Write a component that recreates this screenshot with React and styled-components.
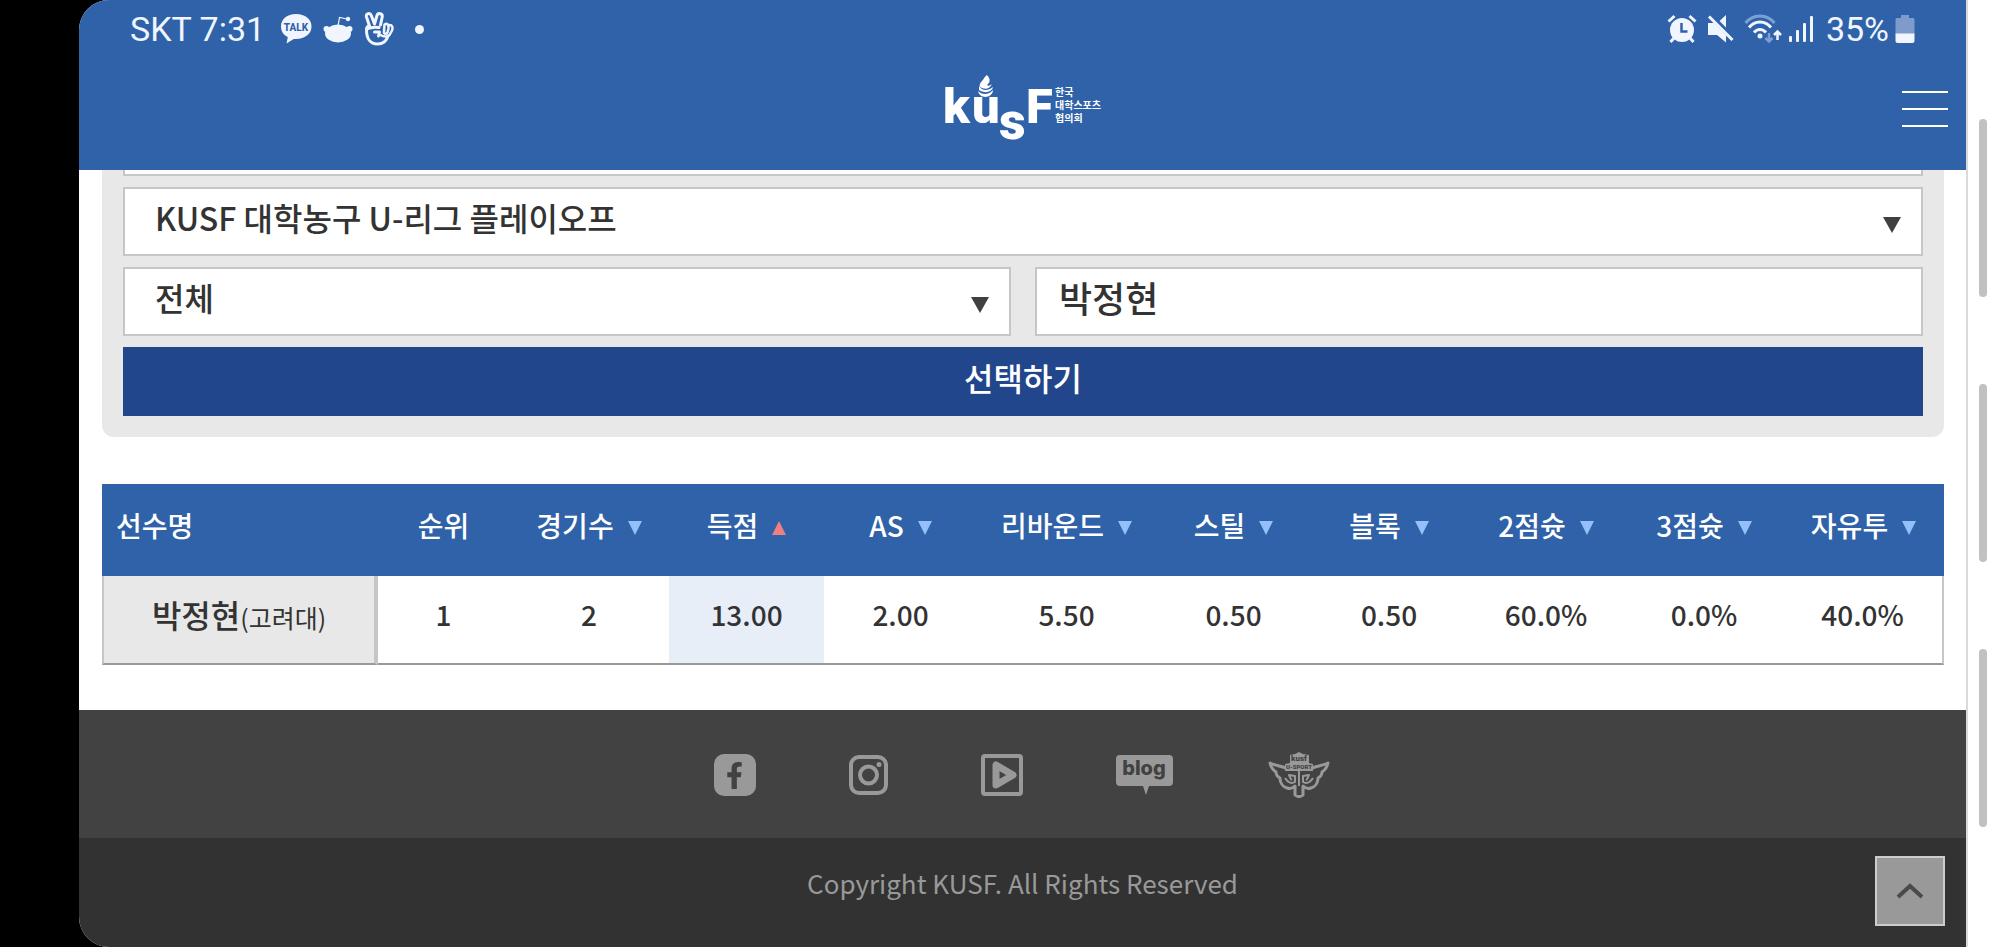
import React, { useState } from 'react';
import styled, { createGlobalStyle } from 'styled-components';
import { FaFacebookF } from 'react-icons/fa';

const GlobalStyle = createGlobalStyle`
  * {
    box-sizing: border-box;
  }

  body {
    margin: 0;
    background: #000000;
    color: #333333;
    font-family: "Noto Sans CJK KR", sans-serif;
    font-weight: 500;
  }

  button, input, select {
    margin: 0;
    font-family: inherit;
    font-weight: inherit;
    color: inherit;
  }
`;

const Device = styled.div`
  display: flex;
  min-height: 100vh;
  padding-left: 79px;
`;

const Screen = styled.div`
  flex: 1;
  min-width: 0;
  display: flex;
  flex-direction: column;
  background: #ffffff;
  border-radius: 30px 0 0 30px;
  overflow: hidden;
`;

const EdgePanel = styled.div`
  width: 34px;
  display: flex;
  flex-direction: column;
  align-items: center;
  gap: 87px;
  padding: 119px 2px 0 0;
  background: #ffffff;
  border-left: 2px solid #dadada;
`;

const EdgeHandle = styled.div`
  width: 8px;
  height: 178px;
  border-radius: 4px;
  background: #c1c1c1;
`;

const Header = styled.header`
  position: relative;
  z-index: 1;
  height: 170px;
  background: #2f62a8;
  color: #ffffff;
`;

const StatusBar = styled.div`
  display: flex;
  justify-content: space-between;
  height: 58px;
  padding: 0 51px;
  font-family: Roboto, sans-serif;
  font-size: 34px;
  font-weight: 400;
  color: #f0f5ff;
`;

const StatusGroup = styled.div`
  display: flex;
  align-items: center;
  gap: ${props => props.gap};
`;

const StatusText = styled.span`
  padding: ${props => props.pad};
`;

const Dot = styled.span`
  width: 9px;
  height: 9px;
  margin-left: 10px;
  border-radius: 50%;
  background: #f0f5ff;
`;

const TitleBar = styled.div`
  display: grid;
  grid-template-columns: 1fr auto 1fr;
  align-items: center;
  height: 102px;
  padding: 0 18px;
`;

const LogoLink = styled.a`
  grid-column: 2;
  display: flex;
  color: #ffffff;
`;

const MenuButton = styled.button`
  justify-self: end;
  display: flex;
  flex-direction: column;
  gap: 15px;
  padding: 0;
  border: 0;
  background: none;
  cursor: pointer;
`;

const MenuLine = styled.span`
  width: 46px;
  height: 2px;
  background: #ffffff;
`;

const Content = styled.main`
  margin-top: -63px;
  padding: 0 22px 45px 23px;
`;

const SearchForm = styled.form`
  display: grid;
  grid-template-columns: 1fr 1fr;
  gap: 11px 24px;
  padding: 0 21px 21px;
  background: #e8e8e8;
  border-radius: 12px;
`;

const SelectBox = styled.div`
  position: relative;
  grid-column: ${props => props.wide ? "1 / -1" : "auto"};
`;

const Select = styled.select`
  display: block;
  appearance: none;
  width: 100%;
  height: 69px;
  padding: 0 60px 10px 30px;
  border: 2px solid #c6c6c6;
  border-radius: 0;
  background: #ffffff;
  font-size: 32px;
`;

const SelectArrow = styled.span`
  position: absolute;
  right: 22px;
  top: 30px;
  border: 9px solid transparent;
  border-top: 16px solid #404040;
  border-bottom: 0;
  pointer-events: none;
`;

const NameInput = styled.input`
  width: 100%;
  height: 69px;
  padding: 0 22px 10px;
  border: 2px solid #c6c6c6;
  border-radius: 0;
  background: #ffffff;
  font-size: 36px;
`;

const SubmitButton = styled.button`
  grid-column: 1 / -1;
  height: 69px;
  padding: 0 0 10px;
  border: 0;
  background: #21468c;
  color: #ffffff;
  font-size: 32px;
  cursor: pointer;
`;

const RecordTable = styled.table`
  width: 100%;
  margin-top: 47px;
  table-layout: fixed;
  border-collapse: separate;
  border-spacing: 0;
  font-size: 28px;
`;

const HeadCell = styled.th`
  height: 92px;
  padding: 0 0 10px;
  background: #2f62a8;
  color: #ffffff;
  font-weight: 500;
  text-align: center;

  &:first-child {
    padding-left: 14px;
    text-align: left;
  }
`;

const SortButton = styled.button`
  display: inline-flex;
  align-items: center;
  gap: 14px;
  padding: 0;
  border: 0;
  background: none;
  font-size: inherit;
  white-space: nowrap;
  cursor: pointer;
`;

const SortMark = styled.span`
  margin-top: 6px;
  border: 7px solid transparent;
  border-top: ${props => props.up ? "0" : "14px solid #93c0fb"};
  border-bottom: ${props => props.up ? "14px solid #f08080" : "0"};
`;

const Cell = styled.td`
  height: 89px;
  padding: 0 0 12px;
  border-bottom: 2px solid #999999;
  background: ${props => props.active ? "#e7eef8" : "#ffffff"};
  text-align: center;

  &:last-child {
    border-right: 2px solid #c6c6c6;
  }
`;

const NameCell = styled.th`
  padding: 0 0 12px;
  border-left: 2px solid #c6c6c6;
  border-right: 4px solid #c6c6c6;
  border-bottom: 2px solid #999999;
  background: #e8e8e8;
  font-size: 32px;
  font-weight: 500;
`;

const School = styled.span`
  font-size: 25px;
  font-weight: 400;
`;

const Social = styled.nav`
  display: flex;
  justify-content: center;
  align-items: center;
  gap: 93px;
  height: 128px;
  padding-top: 2px;
  background: #424242;
`;

const SocialLink = styled.a`
  display: flex;
  color: #999999;
`;

const FacebookTile = styled.span`
  display: flex;
  align-items: center;
  justify-content: center;
  width: 42px;
  height: 42px;
  border-radius: 10px;
  background: #999999;
  color: #424242;
`;

const Footer = styled.footer`
  position: relative;
  flex: 1;
  min-height: 109px;
  padding-top: 26px;
  background: #323232;
  color: #999999;
  font-size: 26px;
  font-weight: 400;
  line-height: 38px;
  text-align: center;
`;

const TopButton = styled.button`
  position: absolute;
  right: 21px;
  top: 18px;
  display: flex;
  align-items: center;
  justify-content: center;
  width: 70px;
  height: 70px;
  padding: 0;
  border: 2px solid #cccccc;
  background: #999999;
  cursor: pointer;
`;

const COLUMNS = [
  { label: '선수명', width: 276 },
  { label: '순위', width: 131 },
  { label: '경기수', width: 160, sort: true },
  { label: '득점', width: 155, sort: true },
  { label: 'AS', width: 153, sort: true },
  { label: '리바운드', width: 179, sort: true },
  { label: '스틸', width: 155, sort: true },
  { label: '블록', width: 156, sort: true },
  { label: '2점슛', width: 158, sort: true },
  { label: '3점슛', width: 158, sort: true },
  { label: '자유투', width: 161, sort: true },
];

const PLAYERS = [
  {
    name: '박정현',
    school: '고려대',
    stats: ['1', '2', '13.00', '2.00', '5.50', '0.50', '0.50', '60.0%', '0.0%', '40.0%'],
  },
];

const Col = styled.col`
  width: ${props => props.$width}px;
`;

function TalkIcon() {
  return (
    <svg width="32" height="30" viewBox="0 0 32 30">
      <path d="M16 0C7 0 1 5 1 12.500c0 5 2.700 8.500 6.800 10.600L6.500 29.500l7.300-4.600c11 .8 17.700-5 17.700-12.400C31.500 5 25 0 16 0z" fill="#f0f5ff" />
      <text x="16" y="17" fontFamily="Roboto, sans-serif" fontSize="10" fontWeight="800" textAnchor="middle" fill="#2f62a8">TALK</text>
    </svg>
  );
}

function RedditIcon() {
  return (
    <svg width="30" height="28" viewBox="0 0 30 28" fill="#f0f5ff">
      <path d="M15 11 L16.500 2.500 L24 4" fill="none" stroke="#f0f5ff" strokeWidth="1.200" />
      <circle cx="25" cy="4" r="2.200" />
      <circle cx="3.500" cy="14" r="3" />
      <circle cx="26.500" cy="14" r="3" />
      <ellipse cx="15" cy="18.500" rx="13" ry="9" />
    </svg>
  );
}

function PeaceIcon() {
  return (
    <svg width="30" height="34" viewBox="0 0 29 34" fill="none" stroke="#f0f5ff" strokeWidth="3" strokeLinecap="round" strokeLinejoin="round">
      <path d="M5 14L2 5c-1-3.500 3.500-4.800 4.800-1.500L10 12l2.500-8.500c1-3.300 6-2 5.200 1.500L16 13" />
      <path d="M5 14c-2.500 0-3 1.500-3 4 0 9 4 14 11 14 6 0 9-3 10.500-8" />
      <path d="M2.500 17c3-1.500 7-2 12-1.500M10 20h5l-1 4" />
      <path d="M20 12.500c3-2 4.500 1 4 4l-1 4c-.8 2-4 1.500-3.500-1z" strokeWidth="2.500" />
      <path d="M25 13c3 0 3.500 2.500 2.500 5.500L25 23c-1.500 2-6 2-9 0" strokeWidth="2.500" />
    </svg>
  );
}

function AlarmIcon() {
  return (
    <svg width="30" height="30" viewBox="0 0 30 30">
      <circle cx="15" cy="16" r="12" fill="#f0f5ff" />
      <path d="M7 24l-3.500 4M23 24l3.500 4M1.500 7.500L7.500 2M28.500 7.500L22.500 2" stroke="#f0f5ff" strokeWidth="3" fill="none" />
      <path d="M14.500 9v8.500h6" stroke="#2f62a8" strokeWidth="2.500" fill="none" />
    </svg>
  );
}

function MuteIcon() {
  return (
    <svg width="27" height="30" viewBox="0 0 27 30" fill="#f0f5ff">
      <path d="M1 9h6l12 12v7.500L10 21H1z" />
      <path d="M19 1v12.500L12.500 7z" />
      <path d="M2 2.500L25.500 26" stroke="#f0f5ff" strokeWidth="3" />
    </svg>
  );
}

function WifiIcon() {
  return (
    <svg width="38" height="30" viewBox="0 0 38 30" fill="none" strokeWidth="3">
      <path d="M1.500 9C9-.5 23-.5 30.500 9" stroke="#7d9fd2" />
      <path d="M5 13.500c6-7.500 16-7.500 22 0M10 18.500c3.500-4 8.500-4 12 0" stroke="#f0f5ff" />
      <circle cx="16" cy="22" r="2.500" fill="#f0f5ff" />
      <path d="M25 19v8M21.500 24l3.500 3.500 3.500-3.500" stroke="#7d9fd2" strokeWidth="2.500" />
      <path d="M33.500 26v-8M30 21l3.500-3.500L37 21" stroke="#f0f5ff" strokeWidth="2.500" />
    </svg>
  );
}

function SignalIcon() {
  return (
    <svg width="26" height="28" viewBox="0 0 26 28" fill="#f0f5ff">
      <rect x="1" y="21" width="3" height="6" rx="1" />
      <rect x="8" y="15" width="3" height="12" rx="1" />
      <rect x="15" y="8" width="3" height="19" rx="1" />
      <rect x="22" y="1" width="3" height="26" rx="1" />
    </svg>
  );
}

function BatteryIcon() {
  return (
    <svg width="20" height="30" viewBox="0 0 20 30">
      <path d="M6 1h8v3h4a1.500 1.500 0 0 1 1.500 1.500V20H.5V5.500A1.500 1.500 0 0 1 2 4h4z" fill="#7f9bcc" />
      <path d="M.5 19.500h19V27a2 2 0 0 1-2 2h-15a2 2 0 0 1-2-2z" fill="#f0f5ff" />
    </svg>
  );
}

function KusfLogo() {
  return (
    <svg width="158" height="92" viewBox="0 -11 158 92" fill="#ffffff">
      <g fontFamily="Roboto, sans-serif" fontWeight="900">
        <text x="-1" y="49" fontSize="49">k</text>
        <text x="28" y="49" fontSize="49">u</text>
        <text x="55" y="65" fontSize="52">s</text>
        <text x="82" y="49" fontSize="49">F</text>
      </g>
      <path d="M43 1c-3 2-3 4-5 6s-3 4-2 6c5 3 10 2 12-3-2 2-4 2-5 1 4-3 3-7 0-10z" />
      <path d="M35 12c3 5 9 5 14 1-1 5-8 7-14 3z" />
      <path d="M34 17c4 4 11 4 15-1 0 8-13 10-15 1z" />
      <g fontFamily="Noto Sans CJK KR, sans-serif" fontSize="10" fontWeight="700">
        <text x="111" y="22">한국</text>
        <text x="111" y="35">대학스포츠</text>
        <text x="111" y="48">협의회</text>
      </g>
    </svg>
  );
}

function InstagramIcon() {
  return (
    <svg width="39" height="40" viewBox="0 0 39 40" fill="none" stroke="currentColor">
      <rect x="2" y="2" width="35" height="36" rx="8" strokeWidth="4" />
      <circle cx="19.500" cy="20" r="8.500" strokeWidth="4" />
      <circle cx="30" cy="9.500" r="2.500" fill="currentColor" stroke="none" />
    </svg>
  );
}

function PlayIcon() {
  return (
    <svg width="42" height="42" viewBox="0 0 42 42" fill="none" stroke="currentColor">
      <rect x="2" y="2" width="38" height="38" rx="2" strokeWidth="4" />
      <path d="M15 11v20l17-10z" strokeWidth="7" strokeLinejoin="round" />
    </svg>
  );
}

function BlogIcon() {
  return (
    <svg width="57" height="42" viewBox="0 0 57 42">
      <path d="M4 1h49a4 4 0 0 1 4 4v23a4 4 0 0 1-4 4H33l-3 9-3-9H4a4 4 0 0 1-4-4V5a4 4 0 0 1 4-4z" fill="currentColor" />
      <text x="28" y="21" fontFamily="Inter, sans-serif" fontSize="20" fontWeight="800" textAnchor="middle" fill="#424242">blog</text>
    </svg>
  );
}

function WingsIcon() {
  return (
    <svg width="66" height="46" viewBox="-2 0 66 46" fill="none" stroke="currentColor" strokeLinejoin="round">
      <path d="M2 11c6 3 13 3 18 6h22c5-3 12-3 18-6-1 5-3 7-6 9 0 3-2 5-4 6 0 5-3 9-7 10-3 1-6 0-8-2v9l-4 2-4-2v-9c-2 2-5 3-8 2-4-1-7-5-7-10-2-1-4-3-4-6-3-2-5-4-6-9z" strokeWidth="3" />
      <path d="M17 26c3 5 7 6 10 4v-6l-6-1c1 2 1 4 3 5M45 26c-3 5-7 6-10 4v-6l6-1c-1 2-1 4-3 5" strokeWidth="2" />
      <path d="M31 19v15" strokeWidth="2" />
      <path d="M22 3l5-1 4-2 4 2 6 1v8l4 1v7H17v-7l5-1z" fill="currentColor" stroke="none" />
      <g fill="#424242" stroke="none" fontFamily="Roboto, sans-serif" fontWeight="900" textAnchor="middle">
        <text x="31" y="9" fontSize="8">kusf</text>
        <text x="31" y="17" fontSize="6">U-SPORT</text>
      </g>
    </svg>
  );
}

function ChevronUp() {
  return (
    <svg width="28" height="18" viewBox="0 0 28 18" fill="none" stroke="#4a4a4a" strokeWidth="4">
      <path d="M2 15L14 4l12 11" />
    </svg>
  );
}

function PhoneStatus() {
  return (
    <StatusBar>
      <StatusGroup gap="11px">
        <StatusText pad="0 4px 0 0">SKT 7:31</StatusText>
        <TalkIcon />
        <RedditIcon />
        <PeaceIcon />
        <Dot />
      </StatusGroup>
      <StatusGroup gap="6px">
        <StatusGroup gap="10px">
          <AlarmIcon />
          <MuteIcon />
          <WifiIcon />
        </StatusGroup>
        <SignalIcon />
        <StatusText pad="0 0 0 6px">35%</StatusText>
        <BatteryIcon />
      </StatusGroup>
    </StatusBar>
  );
}

function Search() {
  const [name, setName] = useState('박정현');

  return (
    <SearchForm onSubmit={e => e.preventDefault()}>
      <SelectBox wide>
        <Select aria-label="연도" />
      </SelectBox>
      <SelectBox wide>
        <Select aria-label="대회">
          <option>KUSF 대학농구 U-리그 플레이오프</option>
        </Select>
        <SelectArrow />
      </SelectBox>
      <SelectBox>
        <Select aria-label="구분">
          <option>전체</option>
        </Select>
        <SelectArrow />
      </SelectBox>
      <NameInput aria-label="선수명" value={name} onChange={e => setName(e.target.value)} />
      <SubmitButton type='submit'>선택하기</SubmitButton>
    </SearchForm>
  );
}

function Records() {
  const [sorted, setSorted] = useState('득점');

  return (
    <RecordTable>
      <colgroup>
        {COLUMNS.map(col => <Col key={col.label} $width={col.width} />)}
      </colgroup>
      <thead>
        <tr>
          {COLUMNS.map(col => (
            <HeadCell key={col.label} scope="col">
              {col.sort ? (
                <SortButton type='button' onClick={() => setSorted(col.label)}>
                  {col.label}
                  <SortMark up={sorted === col.label} />
                </SortButton>
              ) : col.label}
            </HeadCell>
          ))}
        </tr>
      </thead>
      <tbody>
        {PLAYERS.map(player => (
          <tr key={player.name}>
            <NameCell scope="row">{player.name}<School>({player.school})</School></NameCell>
            {player.stats.map((stat, i) => (
              <Cell key={COLUMNS[i + 1].label} active={sorted === COLUMNS[i + 1].label}>{stat}</Cell>
            ))}
          </tr>
        ))}
      </tbody>
    </RecordTable>
  );
}

function App() {
  return (
    <Device>
      <GlobalStyle />
      <Screen>
        <Header>
          <PhoneStatus />
          <TitleBar>
            <LogoLink href="#" aria-label="KUSF"><KusfLogo /></LogoLink>
            <MenuButton type='button' aria-label="메뉴">
              <MenuLine />
              <MenuLine />
              <MenuLine />
            </MenuButton>
          </TitleBar>
        </Header>
        <Content>
          <Search />
          <Records />
        </Content>
        <Social>
          <SocialLink href="#" aria-label="Facebook">
            <FacebookTile><FaFacebookF size={27} /></FacebookTile>
          </SocialLink>
          <SocialLink href="#" aria-label="Instagram"><InstagramIcon /></SocialLink>
          <SocialLink href="#" aria-label="TV"><PlayIcon /></SocialLink>
          <SocialLink href="#" aria-label="Blog"><BlogIcon /></SocialLink>
          <SocialLink href="#" aria-label="U-Sport"><WingsIcon /></SocialLink>
        </Social>
        <Footer>
          Copyright KUSF. All Rights Reserved
          <TopButton type='button' aria-label="맨 위로"><ChevronUp /></TopButton>
        </Footer>
      </Screen>
      <EdgePanel>
        <EdgeHandle />
        <EdgeHandle />
        <EdgeHandle />
      </EdgePanel>
    </Device>
  );
}

export default App;
